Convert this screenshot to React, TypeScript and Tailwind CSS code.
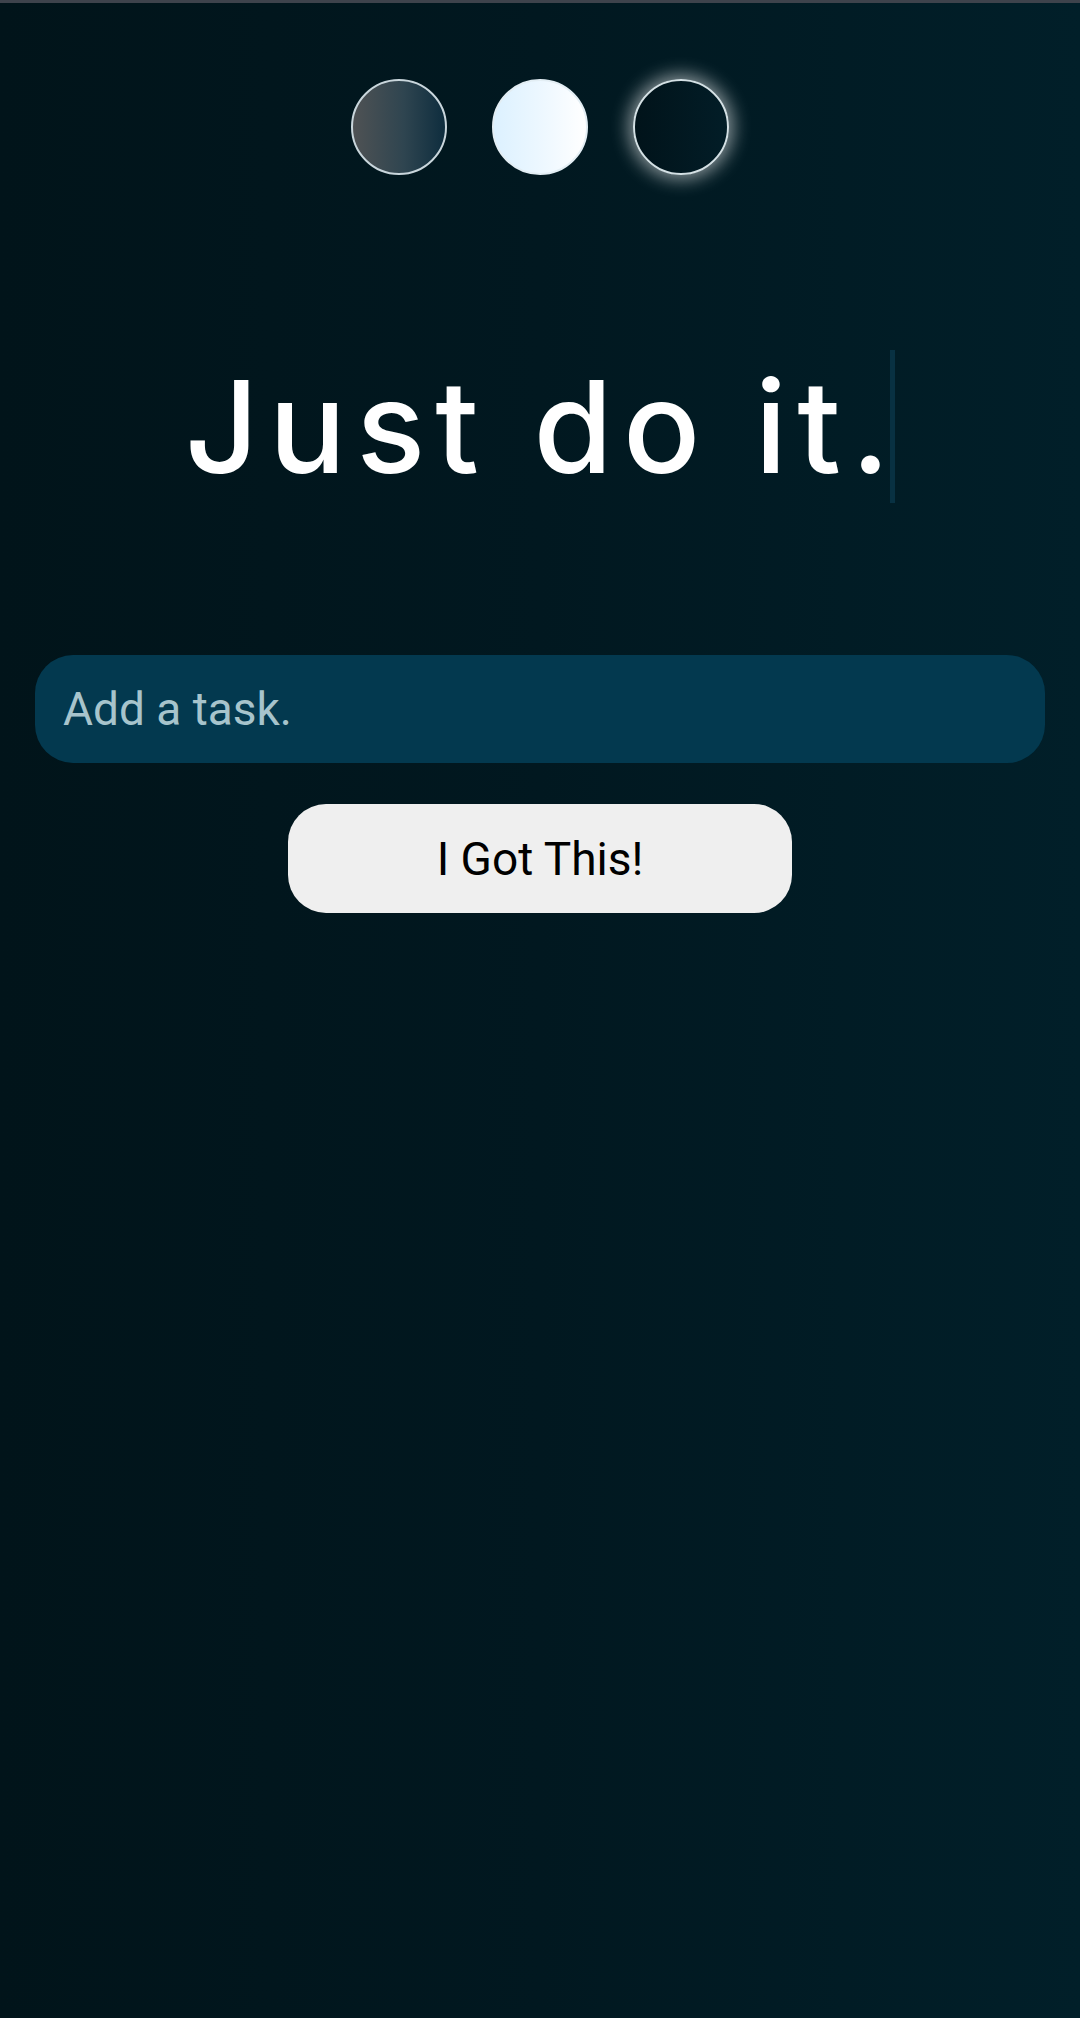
import React from "react";

export default function App() {
  return (
    <div
      className="w-[1080px] h-[2018px] flex flex-col items-center bg-[linear-gradient(90deg,#01141a_0%,#011820_50%,#011f29_100%)]"
      style={{ fontFamily: "Roboto, 'Liberation Sans', sans-serif" }}
    >
      <div className="w-full h-[3px] bg-[#3e434c]" />
      <div className="mt-[76px] flex gap-[45px]">
        <div className="w-[96px] h-[96px] rounded-full border-2 border-[#c9d6dc] bg-[linear-gradient(90deg,#4f5254_0%,#2f4550_55%,#0e2d3e_100%)]" />
        <div className="w-[96px] h-[96px] rounded-full border-2 border-[#e3eef4] bg-[linear-gradient(90deg,#dcf1ff_0%,#eef8ff_55%,#ffffff_100%)]" />
        <div className="w-[96px] h-[96px] rounded-full border-2 border-[#d4e0e4] bg-[linear-gradient(90deg,#01131a_0%,#021d27_100%)] shadow-[0_0_18px_4px_rgba(255,255,255,0.55)]" />
      </div>
      <div className="mt-[175px] flex items-center">
        <span
          className="text-white text-[128px] leading-[153px] tracking-[0.08em] mr-[-0.08em] font-medium"
          style={{ fontFamily: "Inter, Roboto, sans-serif" }}
        >
          Just do it.
        </span>
        <span className="w-[5px] h-[153px] bg-[#083142]" />
      </div>
      <div className="mt-[152px] w-[1010px] h-[108px] rounded-[38px] bg-[#03394f] flex items-center pl-[28px]">
        <span className="text-[46px] text-[#a7c4cc] leading-none">Add a task.</span>
      </div>
      <div className="mt-[41px] w-[504px] h-[109px] rounded-[38px] bg-[#efefef] flex items-center justify-center">
        <span className="text-[46px] text-black leading-none">I Got This!</span>
      </div>
    </div>
  );
}
